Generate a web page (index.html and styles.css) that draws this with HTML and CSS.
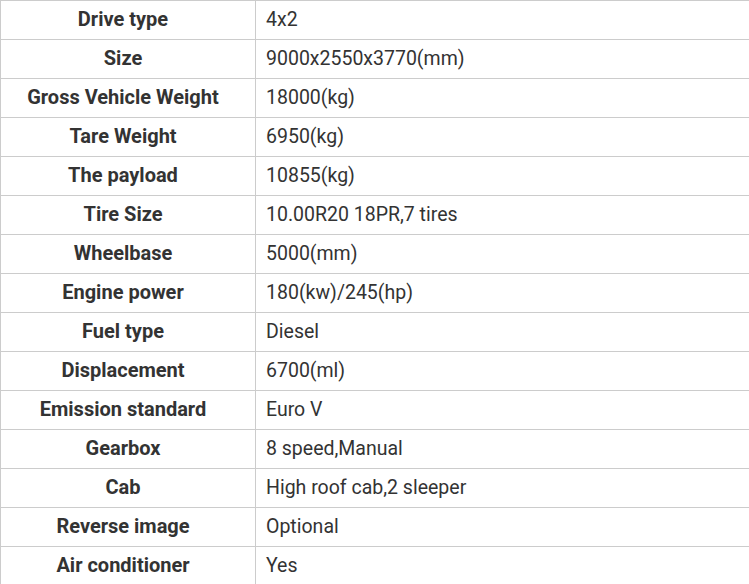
FILE: index.html
```html
<!DOCTYPE html>
<html>
<head>
<meta charset="utf-8">
<link rel="stylesheet" href="styles.css">
</head>
<body>
<table class="spec">
<tbody>
<tr><th>Drive type</th><td>4x2</td></tr>
<tr><th>Size</th><td>9000x2550x3770(mm)</td></tr>
<tr><th>Gross Vehicle Weight</th><td>18000(kg)</td></tr>
<tr><th>Tare Weight</th><td>6950(kg)</td></tr>
<tr><th>The payload</th><td>10855(kg)</td></tr>
<tr><th>Tire Size</th><td>10.00R20 18PR,7 tires</td></tr>
<tr><th>Wheelbase</th><td>5000(mm)</td></tr>
<tr><th>Engine power</th><td>180(kw)/245(hp)</td></tr>
<tr><th>Fuel type</th><td>Diesel</td></tr>
<tr><th>Displacement</th><td>6700(ml)</td></tr>
<tr><th>Emission standard</th><td>Euro V</td></tr>
<tr><th>Gearbox</th><td>8 speed,Manual</td></tr>
<tr><th>Cab</th><td>High roof cab,2 sleeper</td></tr>
<tr><th>Reverse image</th><td>Optional</td></tr>
<tr><th>Air conditioner</th><td>Yes</td></tr>
</tbody>
</table>
</body>
</html>
```
FILE: styles.css
```css
html, body {
  margin: 0;
  padding: 0;
  background: #fff;
}
.spec {
  border-collapse: collapse;
  width: 750px;
  table-layout: fixed;
  font-family: Roboto, "Liberation Sans", sans-serif;
  font-size: 19.5px;
  color: #333;
}
.spec th, .spec td {
  border: 1px solid #ccc;
  height: 39px;
  padding: 0 10px;
  box-sizing: border-box;
  line-height: 24px;
  vertical-align: middle;
}
.spec th {
  width: 255px;
  padding: 0 10px 2px 0;
  font-size: 20px;
  font-weight: bold;
  text-align: center;
}
.spec td {
  text-align: left;
}
```
